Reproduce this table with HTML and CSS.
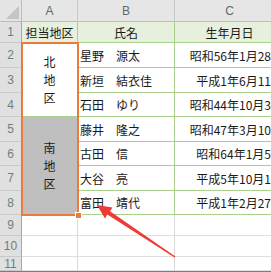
FILE: index.html
```html
<!DOCTYPE html>
<html lang="ja">
<head>
<meta charset="utf-8">
<link rel="stylesheet" href="styles.css">
</head>
<body>
<div class="sheet">
  <div class="grid">
    <div class="corner"><span class="tri"></span></div>
    <div class="ch">A</div>
    <div class="ch">B</div>
    <div class="ch">C</div>

    <div class="rh">1</div>
    <div class="cell hd">担当地区</div>
    <div class="cell hd">氏名</div>
    <div class="cell hd">生年月日</div>

    <div class="rh">2</div>
    <div class="cell area north">北<br>地<br>区</div>
    <div class="cell name">星野　源太</div>
    <div class="cell date">昭和56年1月28日</div>

    <div class="rh">3</div>
    <div class="cell name">新垣　結衣佳</div>
    <div class="cell date">平成1年6月11日</div>

    <div class="rh">4</div>
    <div class="cell name">石田　ゆり</div>
    <div class="cell date">昭和44年10月3日</div>

    <div class="rh">5</div>
    <div class="cell area south">南<br>地<br>区</div>
    <div class="cell name">藤井　隆之</div>
    <div class="cell date">昭和47年3月10日</div>

    <div class="rh">6</div>
    <div class="cell name">古田　信</div>
    <div class="cell date">昭和64年1月5日</div>

    <div class="rh">7</div>
    <div class="cell name">大谷　亮</div>
    <div class="cell date">平成5年10月1日</div>

    <div class="rh">8</div>
    <div class="cell name">富田　靖代</div>
    <div class="cell date">平成1年2月27日</div>

    <div class="rh">9</div>
    <div class="cell empty"></div>
    <div class="cell empty"></div>
    <div class="cell empty"></div>

    <div class="rh">10</div>
    <div class="cell empty"></div>
    <div class="cell empty"></div>
    <div class="cell empty"></div>

    <div class="rh">11</div>
    <div class="cell empty"></div>
    <div class="cell empty"></div>
    <div class="cell empty"></div>
  </div>

  <div class="selection"><span class="handle"></span></div>

  <svg class="arrow" width="271" height="272" viewBox="0 0 271 272">
    <polygon points="97,205 112.5,207.5 110,211.3 175.4,256.5 174.6,257.5 107.3,214.6 105,218.5" fill="#ee3b35"/>
  </svg>
</div>
</body>
</html>
```

FILE: styles.css
```css
html, body {
  margin: 0;
  padding: 0;
  background: #ffffff;
  overflow: hidden;
}

.sheet {
  position: relative;
  width: 271px;
  height: 272px;
  overflow: hidden;
  font-family: "Noto Sans CJK SC", "Noto Sans CJK JP", sans-serif;
  font-size: 12px;
  color: #1a1a1a;
}

.grid {
  display: grid;
  grid-template-columns: 22px 56px 97px 110px;
  grid-template-rows: 22px 21px 25px 25px 24px 25px 24px 25px 24px 21px 21px 14px;
  width: 285px;
  border-bottom: 1px solid #7d7d7d;
}

.corner {
  position: relative;
  background: #e4e4e4;
  border-right: 1px solid #bdbdbd;
  border-bottom: 1px solid #bdbdbd;
  box-sizing: border-box;
}

.tri {
  position: absolute;
  right: 2px;
  bottom: 2px;
  width: 0;
  height: 0;
  border-left: 13px solid transparent;
  border-bottom: 13px solid #c4c4c4;
}

.ch {
  background: #e6e6e6;
  border-right: 1px solid #c9c9c9;
  border-bottom: 1px solid #bdbdbd;
  box-sizing: border-box;
  display: flex;
  align-items: center;
  justify-content: center;
  font-family: "Liberation Sans", sans-serif;
  font-size: 12px;
  color: #5c6b6b;
}

.rh {
  grid-column: 1;
  background: #e0e0e0;
  border-right: 1px solid #a8a8a8;
  border-bottom: 1px solid #c9c9c9;
  box-sizing: border-box;
  display: flex;
  align-items: center;
  justify-content: center;
  font-family: "Liberation Sans", sans-serif;
  font-size: 12px;
  color: #6f7f7f;
}

.cell {
  box-sizing: border-box;
  border-right: 1px solid #a9cf8c;
  border-bottom: 1px solid #a9cf8c;
  display: flex;
  align-items: center;
  white-space: nowrap;
  overflow: hidden;
}

.hd {
  background: #e6f0dc;
  justify-content: center;
}

.area {
  grid-column: 2;
  flex-direction: column;
  justify-content: center;
  text-align: center;
  line-height: 18px;
}

.north {
  grid-row: span 3;
  background: #ffffff;
}

.south {
  grid-row: span 4;
  background: #bfbfbf;
}

.name {
  grid-column: 3;
  padding-left: 2px;
}

.date {
  grid-column: 4;
  justify-content: flex-end;
  padding-right: 1px;
}

.empty {
  border-right: 1px solid #d9d9d9;
  border-bottom: 1px solid #e0e0e0;
}

.selection {
  position: absolute;
  left: 21px;
  top: 42px;
  width: 54px;
  height: 170px;
  border: 2px solid #ea7b3c;
}

.handle {
  position: absolute;
  right: -5px;
  bottom: -5px;
  width: 5px;
  height: 5px;
  background: #ea7b3c;
  border: 1px solid #ffffff;
}

.arrow {
  position: absolute;
  left: 0;
  top: 0;
}
```
